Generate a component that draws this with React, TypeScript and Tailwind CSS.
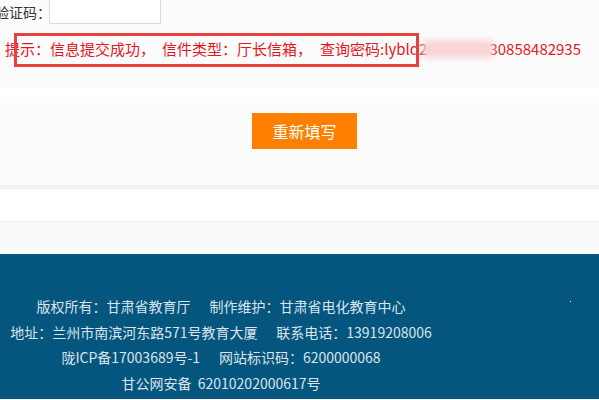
import React from 'react';

const font = { fontFamily: '"Microsoft YaHei", "Noto Sans CJK SC", "Noto Sans", sans-serif' };

function NoticeBar() {
  return (
    <div className="relative h-[88px] bg-[#fcfcfc]">
      <div className="flex h-[24px] items-center">
        <span className="-ml-[5px] w-[54px] shrink-0 whitespace-nowrap text-[14px] leading-none text-[#333]">验证码：</span>
        <div className="-mt-[8px] h-[32px] w-[112px] shrink-0 border border-[#d9d9d9] bg-white" />
      </div>
      <p className="mt-[14px] flex items-center whitespace-nowrap pl-[5px] text-[15px] leading-[22px] text-[#e5161d]">
        <span>提示：信息提交成功，</span>
        <span className="ml-[7px]">信件类型：厅长信箱，</span>
        <span className="ml-[8px]">查询密码:lybld2</span>
        <span className="-ml-[4px] inline-block h-[18px] w-[70px] bg-[#fad3d6] blur-[3px]" />
        <span className="-ml-[4px]">30858482935</span>
      </p>
      {/* red highlight rectangle drawn over the message */}
      <div className="absolute left-[14px] top-[33px] h-[34px] w-[405px] border-[3px] border-[#e8413f]" />
    </div>
  );
}

function ButtonPanel() {
  return (
    <div className="mt-[9px] h-[88px] border-b-4 border-[#f0f0f0] bg-[#fcfcfc] box-content">
      <div className="pl-[252px] pt-[16px]">
        <button className="h-[36px] w-[105px] bg-[#ff7f00] text-[16px] text-white">重新填写</button>
      </div>
    </div>
  );
}

function Footer() {
  const lines = [
    ['版权所有：甘肃省教育厅', '制作维护：甘肃省电化教育中心'],
    ['地址：兰州市南滨河东路571号教育大厦', '联系电话：13919208006'],
    ['陇ICP备17003689号-1', '网站标识码：6200000068'],
    ['甘公网安备  62010202000617号'],
  ];
  return (
    <footer className="relative h-[145px] bg-[#04567f] pt-[40px]">
      <div className="w-[442px] text-center text-[14px] leading-[25.5px] text-[#dbe4eb]">
        {lines.map((l, i) => (
          <div key={i} className="whitespace-pre">
            {l.join('      ')}
          </div>
        ))}
      </div>
      <span className="absolute left-[570px] top-[47px] h-px w-px bg-white" />
    </footer>
  );
}

export default function App() {
  return (
    <div className="h-[400px] w-full overflow-hidden bg-white" style={font}>
      <NoticeBar />
      <ButtonPanel />
      <div className="h-[33px] border-b border-[#ececec] bg-white" />
      <div className="h-[27px] bg-[#fafafa]" />
      <div className="h-[5px] bg-white" />
      <Footer />
    </div>
  );
}
